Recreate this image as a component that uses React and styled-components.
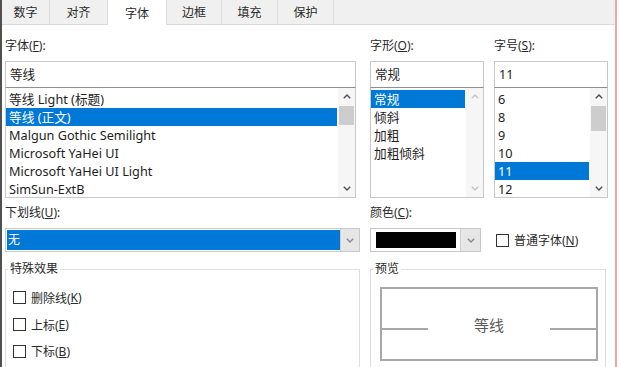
import React from 'react';
import styled, { createGlobalStyle } from 'styled-components';

const GlobalStyle = createGlobalStyle`
  html, body {
    margin: 0;
    padding: 0;
    background: #ffffff;
  }
  body {
    font-family: "Noto Sans", "Noto Sans CJK SC", sans-serif;
    font-size: 12px;
    color: #1e1e1e;
  }
`;

const Frame = styled.div`
  width: 617px;
  height: 367px;
  box-sizing: border-box;
  border-left: 2px solid #505050;
  border-right: 2px solid #f2a5a5;
  background: #ffffff;
  overflow: hidden;
`;

const TabBar = styled.div`
  display: flex;
  height: 25px;
  box-sizing: border-box;
  background: #f0f0f0;
  border-bottom: 1px solid #dadada;
`;

const Tab = styled.div`
  width: ${p => p.$w}px;
  height: ${p => (p.$active ? 25 : 24)}px;
  box-sizing: border-box;
  display: flex;
  align-items: center;
  justify-content: center;
  border-right: 1px solid #dcdcdc;
  background: ${p => (p.$active ? '#ffffff' : '#f0f0f0')};
  color: #2a2a2a;
  position: relative;
  z-index: ${p => (p.$active ? 1 : 0)};
`;

const Content = styled.div`
  padding: 10px 7px 0 3px;
`;

const Row = styled.div`
  display: flex;
  margin-top: ${p => p.$top || 0}px;
`;

const Column = styled.div`
  width: ${p => p.$w}px;
  margin-right: ${p => p.$gap || 0}px;
  display: flex;
  flex-direction: column;
`;

const FieldLabel = styled.div`
  height: 22px;
  line-height: 22px;
  margin-bottom: 4px;
  color: #2a2a2a;
  white-space: nowrap;
`;

const TextInput = styled.div`
  height: 26px;
  box-sizing: border-box;
  border: 1px solid #c8c8c8;
  border-bottom: none;
  padding-left: 4px;
  line-height: 25px;
  font-size: 12.6px;
`;

const ListBox = styled.div`
  height: 111px;
  box-sizing: border-box;
  border: 1px solid #c8c8c8;
  border-top-color: #8f8f8f;
  display: flex;
`;

const Items = styled.div`
  flex: 1;
  padding: 2px 1px 0 0;
  overflow: hidden;
`;

const Item = styled.div`
  height: 18px;
  line-height: 18px;
  padding-left: 3px;
  font-size: 12.7px;
  white-space: nowrap;
  background: ${p => (p.$selected ? '#0078d7' : 'transparent')};
  color: ${p => (p.$selected ? '#ffffff' : '#1e1e1e')};
`;

const ScrollBar = styled.div`
  width: 17px;
  display: flex;
  flex-direction: column;
  background: #f6f6f6;
`;

const ArrowCell = styled.div`
  height: 17px;
  display: flex;
  align-items: center;
  justify-content: center;
`;

const Track = styled.div`
  flex: 1;
  padding: 1px 1px 0;
`;

const Thumb = styled.div`
  height: ${p => p.$h}px;
  background: #cdcdcd;
`;

const Dropdown = styled.div`
  width: ${p => p.$w}px;
  height: 24px;
  box-sizing: border-box;
  border: 1px solid #c8c8c8;
  display: flex;
`;

const DropValue = styled.div`
  flex: 1;
  margin: 1px 0 1px 1px;
  background: #0078d7;
  color: #ffffff;
  line-height: 20px;
  padding-left: 1px;
`;

const ColorValue = styled.div`
  flex: 1;
  padding: 3px 4px 3px 5px;
`;

const Swatch = styled.div`
  height: 100%;
  background: #000000;
`;

const DropButton = styled.div`
  width: ${p => p.$w}px;
  background: #e6e6e6;
  border-left: 1px solid #cfcfcf;
  display: flex;
  align-items: center;
  justify-content: center;
`;

const CheckRow = styled.label`
  display: flex;
  align-items: center;
  height: ${p => p.$h || 26}px;
  color: #2a2a2a;
  white-space: nowrap;
`;

const Box = styled.span`
  width: 13px;
  height: 13px;
  box-sizing: border-box;
  border: 1px solid #333333;
  background: #ffffff;
  margin-right: 5px;
  flex: none;
`;

const Group = styled.fieldset`
  width: ${p => p.$w}px;
  height: 140px;
  box-sizing: border-box;
  margin: 0 ${p => p.$gap || 0}px 0 0;
  padding: 0 0 0 2px;
  border: 1px solid #dedede;
`;

const Legend = styled.legend`
  padding: 0 2px;
  line-height: 16px;
  color: #2a2a2a;
`;

const CheckList = styled.div`
  padding: 7px 0 0 5px;
`;

const Preview = styled.div`
  width: 218px;
  height: 74px;
  box-sizing: border-box;
  margin: 10px 0 0 7px;
  border: 2px solid #a8a8a8;
  display: flex;
  align-items: center;
`;

const Rule = styled.div`
  width: 46px;
  height: 2px;
  margin-top: 10px;
  background: #a8a8a8;
`;

const SampleText = styled.div`
  flex: 1;
  text-align: center;
  font-size: 15px;
  color: #5a5a5a;
`;

const Chevron = ({ up, color = '#505050' }) => (
  <svg width="8" height="5" viewBox="0 0 8 5">
    <path
      d={up ? 'M0.8 4.3 L4 1.1 L7.2 4.3' : 'M0.8 0.7 L4 3.9 L7.2 0.7'}
      fill="none"
      stroke={color}
      strokeWidth="1.4"
    />
  </svg>
);

const Scroll = ({ thumb, disabled }) => (
  <ScrollBar>
    <ArrowCell><Chevron up color={disabled ? '#c4c4c4' : '#505050'} /></ArrowCell>
    <Track>{thumb ? <Thumb $h={thumb} /> : null}</Track>
    <ArrowCell><Chevron color={disabled ? '#c4c4c4' : '#505050'} /></ArrowCell>
  </ScrollBar>
);

const tabs = [
  { label: '数字', w: 48 },
  { label: '对齐', w: 58 },
  { label: '字体', w: 59, active: true },
  { label: '边框', w: 55 },
  { label: '填充', w: 56 },
  { label: '保护', w: 56 },
];

const fonts = [
  '等线 Light (标题)',
  '等线 (正文)',
  'Malgun Gothic Semilight',
  'Microsoft YaHei UI',
  'Microsoft YaHei UI Light',
  'SimSun-ExtB',
];

const styles = ['常规', '倾斜', '加粗', '加粗倾斜'];
const sizes = ['6', '8', '9', '10', '11', '12'];

export default function App() {
  return (
    <>
      <GlobalStyle />
      <Frame>
        <TabBar>
          {tabs.map(t => (
            <Tab key={t.label} $w={t.w} $active={t.active}>{t.label}</Tab>
          ))}
        </TabBar>
        <Content>
          <Row>
            <Column $w={351} $gap={14}>
              <FieldLabel>字体(<u>F</u>):</FieldLabel>
              <TextInput>等线</TextInput>
              <ListBox>
                <Items>
                  {fonts.map((f, i) => (
                    <Item key={f} $selected={i === 1}>{f}</Item>
                  ))}
                </Items>
                <Scroll thumb={19} />
              </ListBox>
            </Column>
            <Column $w={114} $gap={10}>
              <FieldLabel>字形(<u>O</u>):</FieldLabel>
              <TextInput>常规</TextInput>
              <ListBox>
                <Items>
                  {styles.map((s, i) => (
                    <Item key={s} $selected={i === 0}>{s}</Item>
                  ))}
                </Items>
                <Scroll disabled />
              </ListBox>
            </Column>
            <Column $w={114}>
              <FieldLabel>字号(<u>S</u>):</FieldLabel>
              <TextInput>11</TextInput>
              <ListBox>
                <Items>
                  {sizes.map(s => (
                    <Item key={s} $selected={s === '11'}>{s}</Item>
                  ))}
                </Items>
                <Scroll thumb={25} />
              </ListBox>
            </Column>
          </Row>

          <Row $top={4}>
            <Column $w={355} $gap={10}>
              <FieldLabel>下划线(<u>U</u>):</FieldLabel>
              <Dropdown $w={355}>
                <DropValue>无</DropValue>
                <DropButton $w={18}><Chevron color="#8a8a8a" /></DropButton>
              </Dropdown>
            </Column>
            <Column $w={111} $gap={15}>
              <FieldLabel>颜色(<u>C</u>):</FieldLabel>
              <Dropdown $w={111}>
                <ColorValue><Swatch /></ColorValue>
                <DropButton $w={19}><Chevron color="#8a8a8a" /></DropButton>
              </Dropdown>
            </Column>
            <Column $w={110}>
              <FieldLabel />
              <CheckRow $h={24}><Box />普通字体(<u>N</u>)</CheckRow>
            </Column>
          </Row>

          <Row $top={9}>
            <Group $w={355} $gap={10}>
              <Legend>特殊效果</Legend>
              <CheckList>
                <CheckRow $h={27}><Box />删除线(<u>K</u>)</CheckRow>
                <CheckRow $h={27}><Box />上标(<u>E</u>)</CheckRow>
                <CheckRow $h={26}><Box />下标(<u>B</u>)</CheckRow>
              </CheckList>
            </Group>
            <Group $w={236}>
              <Legend>预览</Legend>
              <Preview>
                <Rule />
                <SampleText>等线</SampleText>
                <Rule />
              </Preview>
            </Group>
          </Row>
        </Content>
      </Frame>
    </>
  );
}
